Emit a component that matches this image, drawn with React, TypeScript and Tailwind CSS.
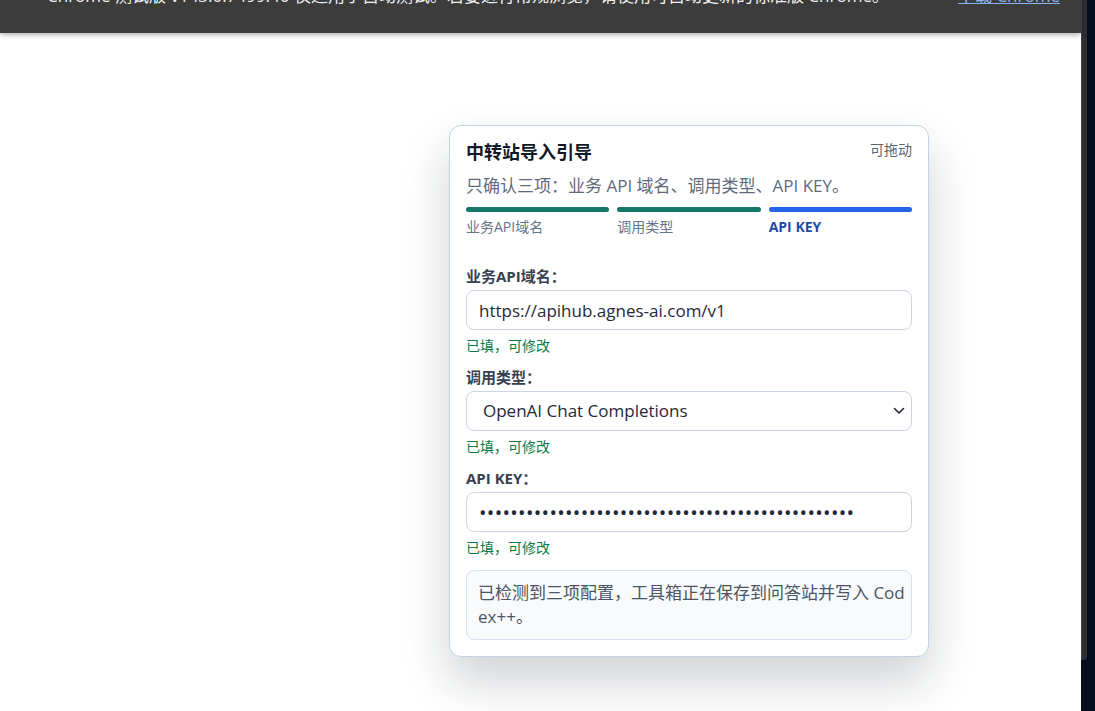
import React from "react";

const FONT = "font-['Segoe_UI','Open_Sans','Noto_Sans_CJK_SC',sans-serif]";

function Hint() {
  return <div className="mt-[6px] text-[14px] leading-[20px] text-[#0b7a4b]">已填，可修改</div>;
}

export default function App() {
  return (
    <div className={`flex h-[711px] w-[1095px] overflow-hidden bg-white ${FONT}`}>
      <div className="relative flex w-[1081px] flex-col bg-white">
        {/* chrome for testing banner */}
        <div className="z-10 flex h-[33px] shrink-0 items-start justify-between overflow-hidden bg-[#3c3c3c] pl-[47px] pr-[21px] shadow-[0_2px_5px_rgba(0,0,0,0.3)]">
          <div className="-mt-[15px] whitespace-nowrap text-[17px] leading-[22px] text-[#f1f1f1]">
            Chrome 测试版 v143.0.7499.40 仅适用于自动测试。若要进行常规浏览，请使用可自动更新的标准版 Chrome。
          </div>
          <div className="-mt-[15px] whitespace-nowrap text-[17px] leading-[22px] text-[#8ab4f8] underline">
            下载 Chrome
          </div>
        </div>

        {/* draggable guide panel */}
        <div className="ml-[449px] mt-[92px] w-[480px] rounded-[12px] border border-[#c5d1e5] bg-white px-[16px] pb-[16px] pt-[14px] shadow-[0_24px_48px_rgba(15,23,42,0.2)]">
          <div className="flex items-start justify-between">
            <div className="text-[18px] font-bold leading-[24px] text-[#111827]">中转站导入引导</div>
            <div className="text-[14px] leading-[20px] text-[#5b6473]">可拖动</div>
          </div>
          <div className="mt-[10px] text-[17px] leading-[24px] text-[#5f6b7d]">
            只确认三项：业务 API 域名、调用类型、API KEY。
          </div>

          <div className="mt-[9px] grid grid-cols-3 gap-[8px]">
            <div>
              <div className="h-[5px] rounded-full bg-[#11786a]" />
              <div className="mt-[5px] text-[14px] leading-[20px] text-[#64748b]">业务API域名</div>
            </div>
            <div>
              <div className="h-[5px] rounded-full bg-[#11786a]" />
              <div className="mt-[5px] text-[14px] leading-[20px] text-[#64748b]">调用类型</div>
            </div>
            <div>
              <div className="h-[5px] rounded-full bg-[#2563eb]" />
              <div className="mt-[5px] text-[14px] font-bold leading-[20px] text-[#1e4aa8]">API KEY</div>
            </div>
          </div>

          <div className="mt-[29px] text-[15px] font-bold leading-[20px] text-[#374151]">业务API域名：</div>
          <input
            className="mt-[4px] block h-[40px] w-full rounded-[8px] border border-[#cbd5e6] bg-white px-[12px] text-[17px] text-[#1e293b] outline-none"
            defaultValue="https://apihub.agnes-ai.com/v1"
          />
          <Hint />

          <div className="mt-[11px] text-[15px] font-bold leading-[20px] text-[#374151]">调用类型：</div>
          <div className="relative mt-[4px]">
            <select
              className="block h-[40px] w-full appearance-none rounded-[8px] border border-[#cbd5e6] bg-white pl-[16px] pr-[36px] text-[17px] text-[#1e293b] outline-none"
              defaultValue="chat"
            >
              <option value="chat">OpenAI Chat Completions</option>
              <option value="responses">OpenAI Responses</option>
            </select>
            <svg
              className="pointer-events-none absolute right-[7px] top-[15px]"
              width="12"
              height="10"
              viewBox="0 0 12 10"
              fill="none"
            >
              <path d="M1.5 2.5 L6 7 L10.5 2.5" stroke="#1f2937" strokeWidth="1.6" strokeLinecap="round" strokeLinejoin="round" />
            </svg>
          </div>
          <Hint />

          <div className="mt-[11px] text-[15px] font-bold leading-[20px] text-[#374151]">API KEY：</div>
          <input
            type="password"
            className="mt-[4px] block h-[40px] w-full rounded-[8px] border border-[#cbd5e6] bg-white px-[12px] text-[20px] tracking-[0.3px] text-[#1e293b] outline-none"
            defaultValue="sk-0123456789abcdefghijklmnopqrstuvwxyzABCDEFGHI"
          />
          <Hint />

          <div className="mt-[12px] rounded-[8px] border border-[#d8e1ef] bg-[#f8fafc] px-[11px] py-[10px] text-[17px] leading-[24px] text-[#4b5563]">
            <div className="whitespace-nowrap">已检测到三项配置，工具箱正在保存到问答站并写入 Cod</div>
            <div>ex++。</div>
          </div>
        </div>
      </div>

      {/* window edge */}
      <div className="flex w-[14px] bg-[#050d1c]">
        <div className="h-[660px] w-[6px] rounded-br-[4px] border-l border-[#454545] bg-[#2e2e2e]" />
      </div>
    </div>
  );
}
